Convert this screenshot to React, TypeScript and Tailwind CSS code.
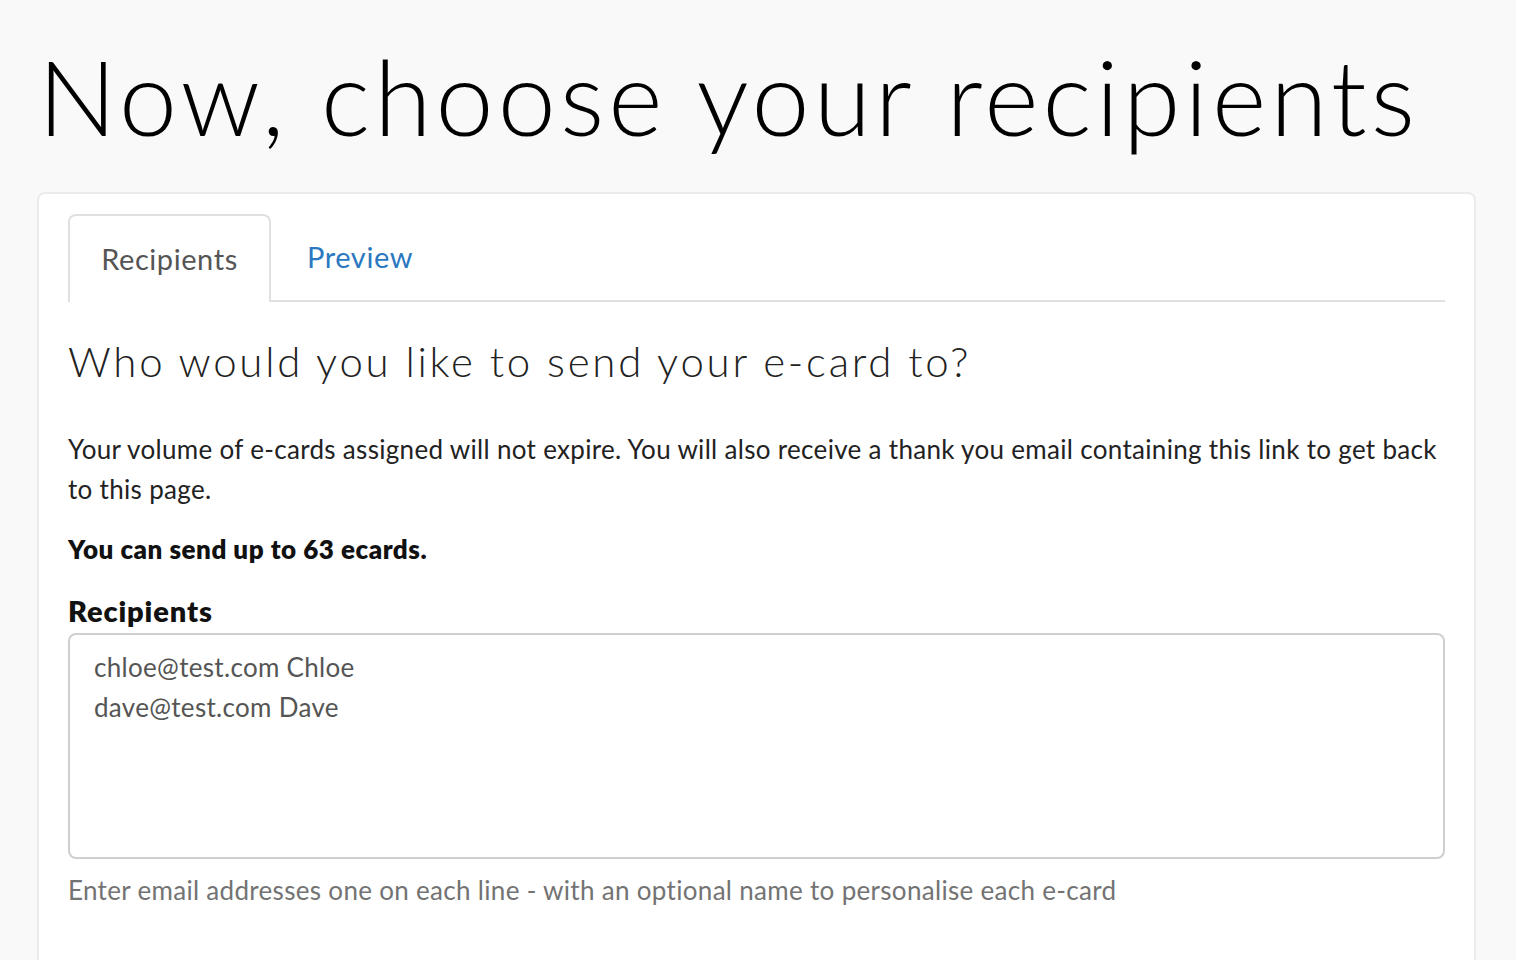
export default function App() {
  return (
    <div className="min-h-screen bg-[#f9f9f9] px-[37px] pt-[36px] overflow-hidden h-[960px]">
      <h1
        className="text-[104px] leading-[120px] font-light text-black tracking-[0.04em] pl-[1px]"
        style={{ fontFamily: 'Lato, "Noto Sans", sans-serif' }}
      >
        Now, choose your recipients
      </h1>

      <div
        className="mt-[36px] w-[1439px] bg-white border-2 border-[#ebebeb] rounded-[8px] px-[29px] pt-[20px] pb-[80px]"
        style={{ fontFamily: 'Lato, "Noto Sans", sans-serif' }}
      >
        <div className="flex border-b-2 border-[#e0e0e0]">
          <div className="-mb-[2px] w-[203px] h-[88px] flex items-center justify-center bg-white border-2 border-b-0 border-[#e0e0e0] rounded-t-[8px] text-[29px] tracking-[0.02em] text-[#555]">
            Recipients
          </div>
          <div className="h-[86px] flex items-center px-[36px] text-[29px] tracking-[0.02em] text-[#2a78c0]">
            Preview
          </div>
        </div>

        <h2 className="mt-[35px] text-[42px] leading-[48px] font-light text-[#222] tracking-[0.065em]">
          Who would you like to send your e-card to?
        </h2>

        <p className="mt-[44px] text-[26px] leading-[40px] tracking-[0.012em] text-[#222]">
          Your volume of e-cards assigned will not expire. You will also receive a thank you email containing this link to get back to this page.
        </p>

        <p className="mt-[20px] text-[26px] leading-[40px] font-extrabold tracking-[0.02em] text-[#111]">
          You can send up to 63 ecards.
        </p>

        <label className="block mt-[22px] text-[29px] leading-[40px] font-extrabold tracking-[0.03em] text-[#111]">
          Recipients
        </label>

        <div className="mt-[2px] h-[226px] border-2 border-[#cfcfcf] rounded-[8px] px-[24px] pt-[12px] text-[26px] leading-[40px] tracking-[0.012em] text-[#555]">
          <div>chloe@test.com Chloe</div>
          <div>dave@test.com Dave</div>
        </div>

        <p className="mt-[11px] text-[26px] leading-[40px] tracking-[0.012em] text-[#737373]">
          Enter email addresses one on each line - with an optional name to personalise each e-card
        </p>
      </div>
    </div>
  );
}
